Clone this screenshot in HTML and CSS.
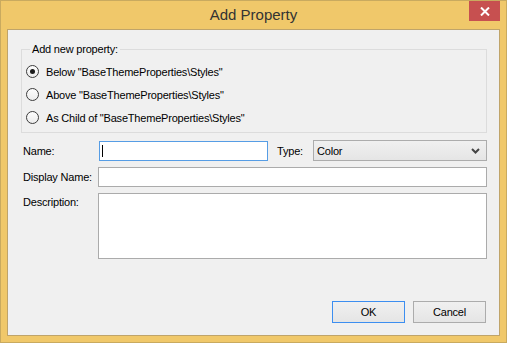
FILE: index.html
```html
<!DOCTYPE html>
<html>
<head>
<meta charset="utf-8">
<link rel="stylesheet" href="styles.css">
</head>
<body>
<div class="window">
  <div class="titlebar">
    <span class="tb-spacer"></span>
    <span class="title">Add Property</span>
    <span class="controls">
      <span class="close">
        <svg width="10" height="9" viewBox="0 0 10 9"><path d="M1 0.5 L9 8.5 M9 0.5 L1 8.5" stroke="#fff" stroke-width="2" fill="none"/></svg>
      </span>
    </span>
  </div>
  <div class="client">
    <fieldset class="group">
      <legend>Add new property:</legend>
      <div class="radios">
        <div class="radio-row"><span class="radio checked"></span><span>Below "BaseThemeProperties\Styles"</span></div>
        <div class="radio-row"><span class="radio"></span><span>Above "BaseThemeProperties\Styles"</span></div>
        <div class="radio-row"><span class="radio"></span><span>As Child of "BaseThemeProperties\Styles"</span></div>
      </div>
    </fieldset>
    <div class="form">
      <div class="row row-top">
        <span class="label label-name">Name:</span>
        <div class="textbox name focused"><span class="caret"></span></div>
        <span class="label label-type">Type:</span>
        <div class="select">
          <span>Color</span>
          <svg width="9" height="6" viewBox="0 0 9 6"><path d="M1 1 L4.5 4.5 L8 1" stroke="#444" stroke-width="2" fill="none"/></svg>
        </div>
      </div>
      <div class="row">
        <span class="label">Display Name:</span>
        <div class="textbox wide"></div>
      </div>
      <div class="row row-desc">
        <span class="label label-desc">Description:</span>
        <div class="textbox textarea"></div>
      </div>
    </div>
    <div class="buttons">
      <div class="btn default">OK</div>
      <div class="btn">Cancel</div>
    </div>
  </div>
</div>
</body>
</html>
```

FILE: styles.css
```css
* { box-sizing: border-box; }
body {
  margin: 0;
  font-family: "Liberation Sans", Arial, sans-serif;
  font-size: 11px;
  letter-spacing: -0.2px;
  color: #000;
}
.window {
  width: 507px;
  height: 343px;
  border: 1px solid #c9aa5f;
  background: #f0c86a;
  padding: 0 6px 6px;
  display: flex;
  flex-direction: column;
}
.titlebar {
  height: 28px;
  display: grid;
  grid-template-columns: 1fr auto 1fr;
}
.title {
  font-size: 15px;
  line-height: 28px;
  color: #333;
  letter-spacing: 0;
}
.controls { justify-self: end; }
.close {
  display: flex;
  width: 31px;
  height: 20px;
  background: #c75050;
  align-items: center;
  justify-content: center;
}
.client {
  flex: 1;
  border: 1px solid #bfa46a;
  background: #f0f0f0;
  display: flex;
  flex-direction: column;
  padding: 13px 12px 12px 13px;
}
.group {
  margin: 0;
  padding: 0;
  border: 1px solid #dcdcdc;
  min-width: 0;
}
.group legend {
  margin-left: 8px;
  padding: 0 2px;
  line-height: 13px;
}
.radios {
  padding: 4px 0 3px 4px;
}
.radio-row {
  height: 23px;
  display: flex;
  align-items: center;
}
.radio {
  width: 13px;
  height: 13px;
  border-radius: 50%;
  border: 1px solid #3c3c3c;
  background: linear-gradient(#fdfdfd, #ececec);
  margin-right: 7px;
  display: flex;
  align-items: center;
  justify-content: center;
}
.radio.checked::after {
  content: "";
  width: 5px;
  height: 5px;
  border-radius: 50%;
  background: #1a1a1a;
}
.form {
  margin-top: 7px;
  padding-left: 2px;
  display: flex;
  flex-direction: column;
  gap: 6px;
}
.row {
  display: flex;
  align-items: center;
}
.row-top {
  height: 21px;
  align-items: flex-end;
}
.row-top .label { align-self: center; }
.label { width: 75px; flex: none; }
.label-name { width: 76px; }
.label-type { width: 36px; }
.row-desc { align-items: flex-start; }
.label-desc { padding-top: 3px; line-height: 13px; }
.textbox {
  height: 20px;
  border: 1px solid #ababab;
  background: #fff;
}
.textbox.focused { border-color: #569de5; }
.name {
  width: 169px;
  margin-right: 9px;
  padding: 3px 0 0 2px;
}
.caret {
  display: block;
  width: 1px;
  height: 12px;
  background: #000;
}
.wide { flex: 1; }
.textarea { flex: 1; height: 66px; }
.select {
  width: 174px;
  height: 21px;
  border: 1px solid #acacac;
  background: linear-gradient(#f0f0f0, #e5e5e5);
  display: flex;
  align-items: center;
  justify-content: space-between;
  padding: 0 6px 0 3px;
}
.buttons {
  margin-top: auto;
  display: flex;
  justify-content: flex-end;
  gap: 8px;
  padding-right: 1px;
}
.btn {
  width: 73px;
  height: 22px;
  border: 1px solid #acacac;
  background: linear-gradient(#f0f0f0, #e5e5e5);
  display: flex;
  align-items: center;
  justify-content: center;
}
.btn.default { border-color: #3c8ef0; }
```
